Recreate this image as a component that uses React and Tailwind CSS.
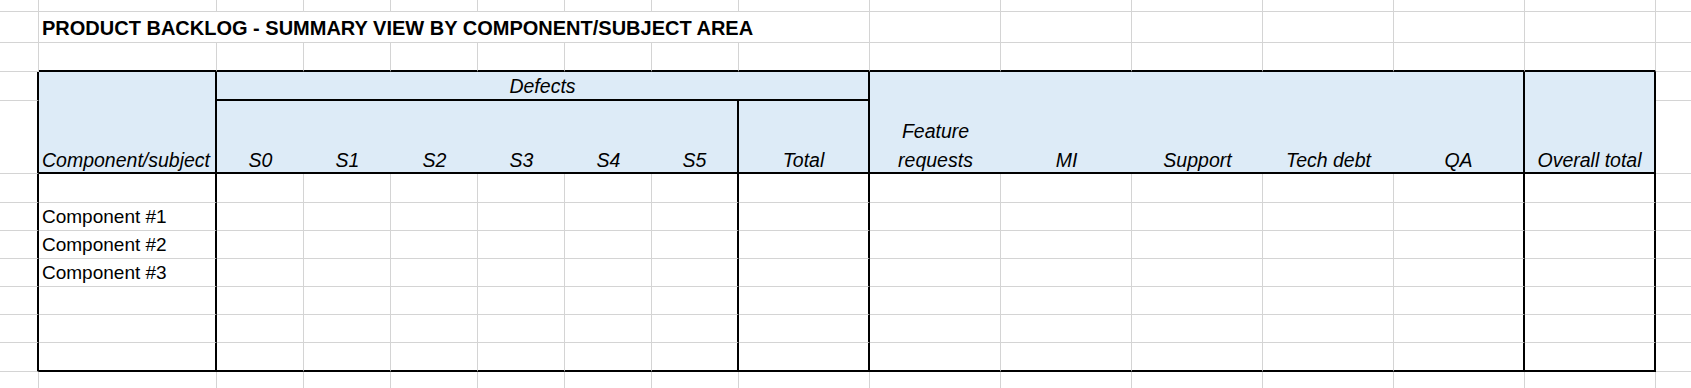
import React from 'react';

const Cell = ({ className = '', children }) => (
  <div className={`flex items-end min-w-0 whitespace-nowrap ${className}`}>{children}</div>
);

const sCols = ['S0', 'S1', 'S2', 'S3', 'S4', 'S5'];
const rightCols = ['Feature requests', 'MI', 'Support', 'Tech debt', 'QA', 'Overall total'];

function PlainRow({ k }) {
  // empty spreadsheet row above the table
  return (
    <>
      <Cell className="border-r border-b border-[#d4d4d4]" />
      <Cell className="border-r border-b border-[#d4d4d4]" />
      {sCols.map((s) => (
        <Cell key={k + s} className="border-r border-b border-[#d4d4d4]" />
      ))}
      <Cell className="border-r border-b border-[#d4d4d4]" />
      {rightCols.map((c) => (
        <Cell key={k + c} className="border-r border-b border-[#d4d4d4]" />
      ))}
      <Cell className="border-b border-[#d4d4d4]" />
    </>
  );
}

function BodyRow({ label, last }) {
  const bb = last ? 'border-b-2 border-b-black' : 'border-b border-b-[#d4d4d4]';
  return (
    <>
      <Cell className="border-r-2 border-r-black border-b border-b-[#d4d4d4]" />
      <Cell className={`border-r-2 border-r-black pl-[3px] pb-[2px] leading-[22px] ${bb}`}>{label}</Cell>
      {sCols.map((s) => (
        <Cell
          key={s}
          className={s === 'S5' ? `border-r-2 border-r-black ${bb}` : `border-r border-r-[#d4d4d4] ${bb}`}
        />
      ))}
      <Cell className={`border-r-2 border-r-black ${bb}`} />
      {rightCols.map((c) => (
        <Cell
          key={c}
          className={
            c === 'QA' || c === 'Overall total'
              ? `border-r-2 border-r-black ${bb}`
              : `border-r border-r-[#d4d4d4] ${bb}`
          }
        />
      ))}
      <Cell className="border-b border-b-[#d4d4d4]" />
    </>
  );
}

export default function App() {
  return (
    <div className="w-[1691px] h-[388px] overflow-hidden bg-white text-black font-['Liberation_Sans',Arial,sans-serif] text-[19px]">
      <div className="grid h-full grid-cols-[39px_178px_repeat(6,87px)_repeat(7,131px)_1fr] grid-rows-[12px_31px_29px_29px_73px_29px_28px_28px_28px_28px_28px_29px_1fr]">
        {/* top row */}
        <PlainRow k="r0" />

        {/* title row, text spills over to the Total column */}
        <Cell className="border-r border-b border-[#d4d4d4]" />
        <Cell className="col-span-8 border-r border-b border-[#d4d4d4] pl-[3px] pb-[3px] text-[20px] font-bold leading-[22px]">
          PRODUCT BACKLOG - SUMMARY VIEW BY COMPONENT/SUBJECT AREA
        </Cell>
        {rightCols.map((c) => (
          <Cell key={'t' + c} className="border-r border-b border-[#d4d4d4]" />
        ))}
        <Cell className="border-b border-[#d4d4d4]" />

        {/* blank row with the table's top edge */}
        <Cell className="border-r border-b border-[#d4d4d4]" />
        <Cell className="border-r border-r-[#d4d4d4] border-b-2 border-b-black" />
        {sCols.map((s) => (
          <Cell key={'b' + s} className="border-r border-r-[#d4d4d4] border-b-2 border-b-black" />
        ))}
        <Cell className="border-r border-r-[#d4d4d4] border-b-2 border-b-black" />
        {rightCols.map((c) => (
          <Cell key={'b' + c} className="border-r border-r-[#d4d4d4] border-b-2 border-b-black" />
        ))}
        <Cell className="border-b border-[#d4d4d4]" />

        {/* header, first line */}
        <Cell className="border-r-2 border-r-black border-b border-b-[#d4d4d4]" />
        <Cell className="row-span-2 bg-[#ddebf7] border-r-2 border-r-black border-b-2 border-b-black pl-[3px] pb-[1px] italic text-[19.5px] leading-[22px]">
          Component/subject
        </Cell>
        <Cell className="col-span-7 justify-center bg-[#ddebf7] border-r-2 border-r-black border-b-2 border-b-black pb-[2px] italic text-[19.5px] leading-[22px]">
          Defects
        </Cell>
        {rightCols.map((c) => (
          <Cell
            key={'h' + c}
            className={
              c === 'QA' || c === 'Overall total'
                ? 'row-span-2 justify-center bg-[#ddebf7] border-r-2 border-r-black border-b-2 border-b-black pb-[1px] italic text-[19.5px] leading-[22px]'
                : 'row-span-2 justify-center bg-[#ddebf7] border-b-2 border-b-black pb-[1px] italic text-[19.5px] leading-[22px]'
            }
          >
            {c === 'Feature requests' ? (
              <div className="flex flex-col items-center gap-[7px]">
                <span>Feature</span>
                <span>requests</span>
              </div>
            ) : (
              c
            )}
          </Cell>
        ))}
        <Cell className="border-b border-[#d4d4d4]" />

        {/* header, second line */}
        <Cell className="border-r-2 border-r-black border-b border-b-[#d4d4d4]" />
        {sCols.map((s) => (
          <Cell
            key={'h' + s}
            className={
              s === 'S5'
                ? 'justify-center bg-[#ddebf7] border-r-2 border-r-black border-b-2 border-b-black pb-[1px] italic text-[19.5px] leading-[22px]'
                : 'justify-center bg-[#ddebf7] border-b-2 border-b-black pb-[1px] italic text-[19.5px] leading-[22px]'
            }
          >
            {s}
          </Cell>
        ))}
        <Cell className="justify-center bg-[#ddebf7] border-r-2 border-r-black border-b-2 border-b-black pb-[1px] italic text-[19.5px] leading-[22px]">
          Total
        </Cell>
        <Cell className="border-b border-[#d4d4d4]" />

        {/* body */}
        <BodyRow label="" />
        <BodyRow label="Component #1" />
        <BodyRow label="Component #2" />
        <BodyRow label="Component #3" />
        <BodyRow label="" />
        <BodyRow label="" />
        <BodyRow label="" last />

        {/* row below the table */}
        <Cell className="border-r border-[#d4d4d4]" />
        <Cell className="border-r border-[#d4d4d4]" />
        {sCols.map((s) => (
          <Cell key={'e' + s} className="border-r border-[#d4d4d4]" />
        ))}
        <Cell className="border-r border-[#d4d4d4]" />
        {rightCols.map((c) => (
          <Cell key={'e' + c} className="border-r border-[#d4d4d4]" />
        ))}
        <Cell />
      </div>
    </div>
  );
}
